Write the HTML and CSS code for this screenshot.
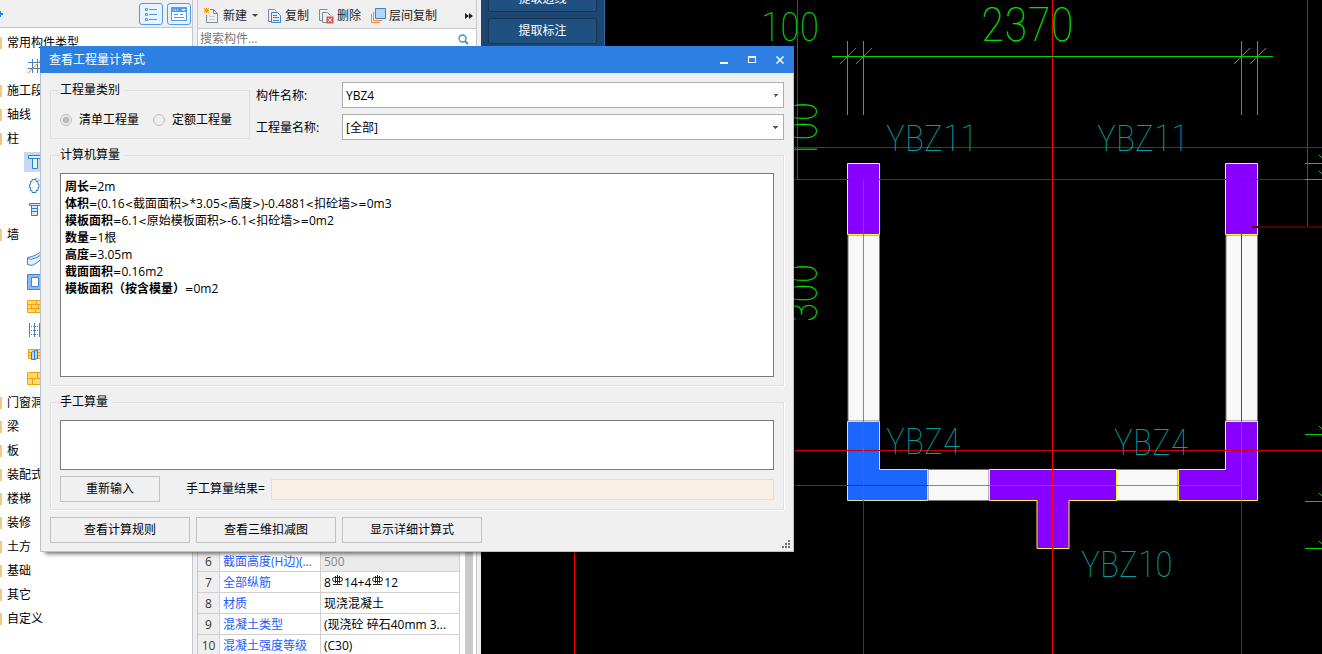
FILE: index.html
```html
<!DOCTYPE html>
<html lang="zh-CN">
<head>
<meta charset="utf-8">
<title>查看工程量计算式</title>
<link rel="stylesheet" href="styles.css">
</head>
<body>
<div class="app">
  <aside class="nav">
    <header class="nav-head">
      <svg class="plus" width="4" height="24" viewBox="0 0 4 24"><path d="M0 12h3M0 9v6" stroke="#2f80d8" stroke-width="2"/></svg>
      <button class="view-btn" aria-label="列表"><svg width="14" height="14" viewBox="0 0 14 14" fill="none" stroke="#4d9bea"><path d="M1.5 1.5h2v2h-2zM1.5 6.500h2v2h-2zM1.500 11.500h2v2h-2zM5 2.500h8M5 7.500h8M5 12.500h8"/></svg></button>
      <button class="view-btn" aria-label="卡片"><svg width="16" height="14" viewBox="0 0 16 14"><path d="M.5.5h15v13H.5z" fill="#fff" stroke="#4d9bea"/><path d="M1 1h14v4H1z" fill="#4d9bea"/><path d="M2 3h1M4 3h1M6 3h1M11 2.500h3l-1.500 1.500z" stroke="#fff"/><path d="M3 7.500h4M3 10.500h10M9 7.500h3" stroke="#4d9bea"/></svg></button>
    </header>
    <ul class="tree">
      <li class="folder">常用构件类型</li>
      <li class="leaf"><svg viewBox="0 0 16 16"><path d="M5.500 1v14M10.500 1v14M1 4.500h15M1 10.500h15" stroke="#3d86d6" fill="none"/><path d="M1 15L14 2" stroke="#f08a30"/></svg></li>
      <li class="folder">施工段</li>
      <li class="folder">轴线</li>
      <li class="folder">柱</li>
      <li class="leaf selected"><svg viewBox="0 0 16 16" fill="#e6f1ff" stroke="#2f7fd0"><path d="M1.500 1.500h14v3h-14zM5.500 4.500h5v10h-5z"/></svg></li>
      <li class="leaf"><svg viewBox="0 0 16 16" fill="#fff" stroke="#2f7fd0"><path d="M5 1.500h4v2h2v3h1v3h-1v3h-2v2H5v-2H3.500v-3h-1v-3h1v-3H5z"/><path d="M8 .5h3v2h2" stroke="#9bc5f0"/></svg></li>
      <li class="leaf"><svg viewBox="0 0 16 16" fill="#d9e9fa" stroke="#2f7fd0"><path d="M2.500 1.500h12v2h-12zM4.500 3.500h6v10h-6zM5 6.500h5M5 9.500h5"/></svg></li>
      <li class="folder">墙</li>
      <li class="leaf"><svg viewBox="0 0 16 16" fill="#e3eef9" stroke="#3d86d6"><path d="M.5 7.500Q10 6 15 .5v8Q9 14 5 15.500l-4.500-1z"/><path d="M.5 7.500l3 2Q11 8 15 4" fill="none"/></svg></li>
      <li class="leaf"><svg viewBox="0 0 16 16" fill="#8dbaf0" stroke="#3d86d6"><path d="M.5.5h15v15H.5z"/><path d="M4.500 3.500h7v9h-7z" fill="#fff"/></svg></li>
      <li class="leaf"><svg viewBox="0 0 16 16" fill="#ffd978" stroke="#f5a300"><path d="M.5 2.500h15v12H.5zM.5 6.500h15M.5 10.500h15M9.500 2v4M4.500 6v4M11.500 6v4M8.500 10v4"/></svg></li>
      <li class="leaf"><svg viewBox="0 0 16 16" stroke="#3d86d6" fill="none"><path d="M2.500 1v14M7.500 1v14M12.500 1v14"/><path d="M2 4.500h14M2 8.500h14M2 12.500h14" stroke-dasharray="1 1"/></svg></li>
      <li class="leaf"><svg viewBox="0 0 16 16" fill="#ffd978" stroke="#f5a300"><path d="M1.500 3.500h14v9h-14zM1 6.500h14M1 9.500h14"/><path d="M4.500 6.500l3-2h3v8l-3 1h-3z" fill="#b9d7fa" stroke="#2f7fd0"/><path d="M7.500 5v9" stroke="#2f7fd0"/></svg></li>
      <li class="leaf"><svg viewBox="0 0 16 16" fill="#ffd978" stroke="#f5a300"><path d="M.5 2.500h15v12H.5zM.5 8.500h15M10.500 2v6M5.500 8v6"/></svg></li>
      <li class="folder">门窗洞</li>
      <li class="folder">梁</li>
      <li class="folder">板</li>
      <li class="folder">装配式</li>
      <li class="folder">楼梯</li>
      <li class="folder">装修</li>
      <li class="folder">土方</li>
      <li class="folder">基础</li>
      <li class="folder">其它</li>
      <li class="folder">自定义</li>
    </ul>
  </aside>

  <section class="parts">
    <div class="toolbar">
      <button class="tool"><svg width="16" height="16" viewBox="0 0 16 16" fill="none"><path d="M2.500 7v7.500h11v-9l-4-4H6M9.500 1.500v4h4" stroke="#7c8c9c"/><path d="M5 8.500h6M5 11.500h6" stroke="#c8cdd4"/><path d="M0 0l5 5M5 0L0 5M2.500 0v5M0 2.500h5" stroke="#f39a1c"/></svg>新建<i class="caret"></i></button>
      <button class="tool"><svg width="14" height="16" viewBox="0 0 14 16" fill="none" stroke="#3a7fd0"><path d="M3.500 13.500h-3V1.500h6l2 2" stroke="#7c8c9c"/><path d="M3.500 4.500h6l3 3v7h-9zM5 7.500h4M5 9.500h6M5 12.500h6"/></svg>复制</button>
      <button class="tool"><svg width="15" height="16" viewBox="0 0 15 16" fill="none"><path d="M3.500 12.500h-3V1.500h8M8 14.500H3.500v-10h5l3 3" stroke="#7c8c9c"/><path d="M7.500 8.500h7v7h-7z" fill="#d9534f"/><path d="M9 10l4 4M13 10l-4 4" stroke="#fff"/></svg>删除</button>
      <button class="tool"><svg width="15" height="16" viewBox="0 0 15 16" fill="none"><path d="M.5 6v8.500H9M2.500 4v8.500H11" stroke="#f08a30"/><path d="M4.500.5h10v10h-10z" fill="#b4d5ff" stroke="#3a7fd0"/></svg>层间复制</button>
      <button class="tool more" aria-label="更多"><svg width="8" height="6" viewBox="0 0 8 6"><path d="M0 0l4 3-4 3zM4 0l4 3-4 3z" fill="#222"/></svg></button>
    </div>
    <div class="search">
      <input type="text" placeholder="搜索构件..." aria-label="搜索构件">
      <svg width="11" height="11" viewBox="0 0 11 11" fill="none" stroke="#3192c8"><circle cx="4.500" cy="4.500" r="3.500" stroke-width="1.300"/><path d="M7 7l3 3" stroke-width="2"/></svg>
    </div>
    <div class="props">
      <table>
        <tr><th>6</th><td class="key">截面高度(H边)(...</td><td class="muted">500</td></tr>
        <tr><th>7</th><td class="key">全部纵筋</td><td>8<svg class="rebar" viewBox="0 0 11 12"><path d="M5.500 0v10M2.500 2.500h6a2 2 0 0 1 0 4h-6a2 2 0 0 1 0-4zM3.500 1v7M7.500 1v7M1 9.500h9"/></svg>14+4<svg class="rebar" viewBox="0 0 11 12"><path d="M5.500 0v10M2.500 2.500h6a2 2 0 0 1 0 4h-6a2 2 0 0 1 0-4zM3.500 1v7M7.500 1v7M1 9.500h9"/></svg>12</td></tr>
        <tr><th>8</th><td class="key">材质</td><td>现浇混凝土</td></tr>
        <tr><th>9</th><td class="key">混凝土类型</td><td>(现浇砼 碎石40mm 3...</td></tr>
        <tr><th>10</th><td class="key">混凝土强度等级</td><td>(C30)</td></tr>
      </table>
      <div class="scroll"></div>
    </div>
  </section>

  <main class="canvas">
    <svg class="drawing" width="100%" height="100%">
      <g transform="translate(-481 0)">
        <g class="wall">
          <path d="M848 235h31.500v186H848zM1226 235h31.500v186H1226zM928 469.500h61v31h-61zM1116 469.500h62v31h-62z"/>
        </g>
        <g class="column">
          <path d="M847.500 163.500h32v71h-32zM1225.500 163.500h32v71h-32z"/>
          <path d="M989.500 469.500h127v31h-47.500v48h-32v-48H989.500z"/>
          <path d="M1225.500 421.500h32v79h-79v-31h47z"/>
          <path class="picked" d="M847.500 421.500h32v48h48v31h-80z"/>
        </g>
        <g class="axis">
          <path d="M1052.500 0v654M797.500 0v179M1307.500 0v227M574.500 500v154M1241.500 179v242"/>
          <path class="dim" d="M794 147.500h528M794 179.500h513M794 450.500h528M794 485.500h134M863.500 501v153M1241.500 501v153"/>
          <path class="soft" d="M863.500 179v322M928 485.500h313M1241.500 421v80"/>
          <path class="faint" d="M1252 227h70"/>
        </g>
        <g class="dimension">
          <path d="M832 56.500h441M847.500 41v74M863.500 41v74M1241.500 41v74M1257.500 41v74M840 64l16-16M856 64l16-16M1234 64l16-16M1250 64l16-16"/>
          <path d="M1305 163.500h17M1305 179.500h17M1305 434.500h17M1305 501.500h17M1305 548.500h17M1319 155l4 4M1319 171l4 4M1319 426l4 4M1319 493l4 4M1319 541l4 4"/>
        </g>
        <g class="dim-text">
          <text x="761" y="41">100</text>
          <text x="981" y="41" class="wide">2370</text>
          <text transform="translate(817 160) rotate(-90)">100</text>
          <text transform="translate(817 322) rotate(-90)">300</text>
        </g>
        <g class="label">
          <text x="886" y="151">YBZ11</text>
          <text x="1097" y="151">YBZ11</text>
          <text x="886" y="454">YBZ4</text>
          <text x="1114" y="455">YBZ4</text>
          <text x="1081" y="577">YBZ10</text>
        </g>
      </g>
    </svg>
    <div class="cad-tools">
      <button>提取边线</button>
      <button>提取标注</button>
    </div>
  </main>
</div>

<div class="dialog" role="dialog" aria-labelledby="dialog-title">
  <header class="titlebar">
    <h1 id="dialog-title">查看工程量计算式</h1>
    <button aria-label="最小化"><svg width="8" height="8" viewBox="0 0 8 8"><path d="M0 6h8v2H0z" fill="#fff"/></svg></button>
    <button aria-label="最大化"><svg width="8" height="8" viewBox="0 0 8 8"><path d="M0 0h8v7H0zM1 2v4h6V2z" fill="#fff" fill-rule="evenodd"/></svg></button>
    <button aria-label="关闭"><svg width="8" height="8" viewBox="0 0 8 8"><path d="M.5.5l7 7M7.500.5l-7 7" stroke="#fff" stroke-width="1.500"/></svg></button>
  </header>
  <div class="dialog-body">
    <div class="filters">
      <fieldset class="kind">
        <legend>工程量类别</legend>
        <label><input type="radio" name="kind" checked disabled>清单工程量</label>
        <label><input type="radio" name="kind" disabled>定额工程量</label>
      </fieldset>
      <div class="fields">
        <label for="part">构件名称:</label>
        <select id="part"><option>YBZ4</option></select>
        <label for="quantity">工程量名称:</label>
        <select id="quantity"><option>[全部]</option></select>
      </div>
    </div>
    <fieldset class="computed">
      <legend>计算机算量</legend>
      <div class="result-text">
        <p><b>周长</b><i>=</i>2m</p>
        <p><b>体积</b><i>=</i>(0.16<i>&lt;</i>截面面积<i>&gt;</i>*3.05<i>&lt;</i>高度<i>&gt;</i>)-0.4881<i>&lt;</i>扣砼墙<i>&gt;=</i>0m3</p>
        <p><b>模板面积</b><i>=</i>6.1<i>&lt;</i>原始模板面积<i>&gt;</i>-6.1<i>&lt;</i>扣砼墙<i>&gt;=</i>0m2</p>
        <p><b>数量</b><i>=</i>1根</p>
        <p><b>高度</b><i>=</i>3.05m</p>
        <p><b>截面面积</b><i>=</i>0.16m2</p>
        <p><b>模板面积（按含模量）</b><i>=</i>0m2</p>
      </div>
    </fieldset>
    <fieldset class="manual">
      <legend>手工算量</legend>
      <textarea aria-label="手工算量"></textarea>
      <div class="manual-row">
        <button class="btn">重新输入</button>
        <label for="manual-result">手工算量结果=</label>
        <input id="manual-result" type="text" readonly>
      </div>
    </fieldset>
    <div class="actions">
      <button class="btn">查看计算规则</button>
      <button class="btn">查看三维扣减图</button>
      <button class="btn">显示详细计算式</button>
    </div>
  </div>
  <svg class="grip" width="8" height="8" viewBox="0 0 8 8"><path d="M6 0h2v2H6zM3 3h2v2H3zM6 3h2v2H6zM0 6h2v2H0zM3 6h2v2H3zM6 6h2v2H6z" fill="#6d7580"/></svg>
</div>
</body>
</html>
```
FILE: styles.css
```css
* { box-sizing: border-box; }
body {
  margin: 0;
  overflow: hidden;
  background: #f0f0f0;
  color: #000;
}
body, button, input, select, textarea {
  font: 12px/16px "Open Sans", "Noto Sans CJK SC", sans-serif;
}
button { padding: 0; color: inherit; }
svg { display: block; flex: none; }

.app { display: flex; height: 100vh; overflow: hidden; }

/* component type tree */
.nav { flex: none; width: 193px; background: #fff; border-right: 1px solid #c4c6cc; }
.nav-head {
  display: flex;
  align-items: center;
  gap: 4px;
  height: 28px;
  background: #efefef;
  border-bottom: 1px solid #c4c6cc;
}
.plus { margin-right: auto; }
.view-btn {
  display: grid;
  place-items: center;
  width: 24px;
  height: 22px;
  background: #e8f3ff;
  border: 1px solid #4d9bea;
  border-radius: 3px;
}
.view-btn:last-child { margin-right: 1px; }
.tree { margin: 0; padding: 2px 0 0; list-style: none; }
.tree li { display: flex; align-items: center; height: 24px; }
.tree .folder { padding: 2px 0 0 7px; }
.folder::before {
  content: "";
  width: 2px;
  height: 12px;
  margin: 0 5px 0 -7px;
  background: #f0c987;
}
.tree .leaf { padding-left: 27px; }
.leaf svg { width: 16px; height: 16px; }
.leaf.selected {
  background: linear-gradient(#c7d9f1, #c7d9f1) 24px 2px / 100% 20px no-repeat;
}

/* component list */
.parts {
  flex: none;
  display: flex;
  flex-direction: column;
  width: 280px;
  margin: 0 4px;
  background: #fff;
  border: solid #c4c6cc;
  border-width: 0 1px;
}
.toolbar {
  display: flex;
  align-items: center;
  gap: 10px;
  height: 29px;
  padding: 3px 3px 0 6px;
  background: #efefef;
  border-bottom: 1px solid #c4c6cc;
}
.tool {
  display: flex;
  align-items: center;
  gap: 3px;
  color: #222;
  background: none;
  border: 0;
}
.more { margin-left: auto; }
.caret {
  margin-left: 2px;
  border: solid transparent;
  border-width: 3px 3px 0;
  border-top-color: #444;
}
.search { display: flex; align-items: center; padding: 2px 7px 0 2px; }
.search input { flex: 1; min-width: 0; padding: 0; border: 0; outline: 0; }
.search input::placeholder { color: #777; }
.props { display: flex; margin: auto 3px -2px 0; }
table { flex: 1; border-spacing: 0; table-layout: fixed; }
tr { height: 21px; }
th, td {
  padding: 2px 2px 0 3px;
  font-weight: 400;
  text-align: left;
  line-height: 16px;
  white-space: nowrap;
  overflow: hidden;
  border: solid #d0d0d0;
  border-width: 0 1px 1px 0;
}
th { width: 22px; padding: 2px 0 0; text-align: center; color: #333; background: #efefef; }
.key { width: 101px; color: #1a5cff; }
.muted { color: #888; background: #ebebeb; }
.rebar {
  display: inline-block;
  width: 11px;
  height: 12px;
  margin: 0 1px;
  vertical-align: baseline;
  fill: none;
  stroke: #222;
}
.scroll { width: 8px; margin-left: 5px; background: #c9c9c9; }

/* drawing canvas */
.canvas { position: relative; flex: 1; min-width: 0; background: #000; overflow: hidden; }
.drawing { position: absolute; inset: 0; fill: none; }
.wall path { fill: #f8f8f8; stroke: #777; }
.column path { fill: #80f; stroke: #ffff20; }
.column .picked { fill: #1a66ff; stroke: #dce690; }
.axis { stroke: #f00; }
.axis .dim { stroke: #c80000; }
.axis .soft { stroke: #f03048; stroke-opacity: .8; }
.axis .faint { stroke: #500000; stroke-width: 2px; }
.dimension { stroke: #00d000; }
.dim-text, .label {
  font-family: "Roboto Condensed", Roboto, sans-serif;
  font-weight: 100;
  font-size: 36px;
}
.dim-text { fill: #00e000; font-size: 40px; }
.dim-text .wide { font-size: 48px; }
.label { fill: #00a0a0; }
.cad-tools {
  position: absolute;
  top: -14px;
  left: 0;
  display: flex;
  flex-direction: column;
  gap: 6px;
  width: 124px;
  height: 400px;
  padding: 0 7px;
  background: #1d4672;
  border-right: 1px solid #2b659c;
}
.cad-tools button {
  height: 26px;
  color: #fff;
  background: #205080;
  border: 1px solid #173656;
  border-radius: 2px;
}

/* quantity dialog */
.dialog {
  position: absolute;
  top: 46px;
  left: 40px;
  width: 754px;
  background: #f0f0f0;
  border: 1px solid #b8c2d0;
  border-top: 0;
  box-shadow: 3px 4px 4px -2px #0008;
}
.titlebar {
  display: flex;
  align-items: center;
  gap: 20px;
  height: 27px;
  margin: 0 -1px;
  padding: 0 10px 0 9px;
  color: #fff;
  background: #2d7fe2;
}
.titlebar h1 { margin: 0 auto 0 0; font: inherit; }
.titlebar button { background: none; border: 0; }
.dialog-body {
  display: flex;
  flex-direction: column;
  gap: 7px;
  padding: 9px 9px 8px;
}
.filters { display: flex; gap: 6px; }
fieldset {
  min-width: 0;
  margin: 0;
  padding: 0 9px;
  border: 1px solid #e0e0e0;
  box-shadow: inset 1px 0 #fff, 0 1px #fff, 1px 0 #fff;
}
legend { padding: 0 4px 0 0; }
.kind { display: flex; gap: 14px; width: 200px; height: 57px; box-shadow: none; }
.kind label { display: flex; align-items: center; gap: 7px; padding-top: 3px; }
input[type="radio"] {
  appearance: none;
  width: 12px;
  height: 12px;
  margin: 0;
  border: 1px solid #bcbcbc;
  border-radius: 50%;
}
input[type="radio"]:checked { background: radial-gradient(circle, #bcbcbc 3px, transparent 4px); }
.fields {
  flex: 1;
  display: grid;
  grid-template-columns: 80px 1fr;
  grid-auto-rows: 26px;
  gap: 6px;
  align-items: center;
}
.fields label { padding-top: 2px; }
select {
  appearance: none;
  height: 26px;
  padding: 1px 3px 0;
  color: #000;
  background-color: #fff;
  background-image:
    linear-gradient(to bottom right, #555 50%, transparent 50%),
    linear-gradient(to bottom left, #555 50%, transparent 50%);
  background-size: 3px 3px;
  background-position: right 4px center, right 7px center;
  background-repeat: no-repeat;
  border: 1px solid #adadad;
  border-radius: 0;
}
.computed { padding-bottom: 8px; }
.result-text {
  height: 204px;
  margin-top: 10px;
  padding: 4px;
  line-height: 17px;
  background: #fff;
  border: 1px solid #7a7a7a;
}
.result-text p { margin: 0; height: 17px; }
.result-text i { font: 10px "DejaVu Sans", sans-serif; }
.manual { margin-top: 1px; padding-bottom: 7px; }
textarea {
  display: block;
  width: 100%;
  height: 50px;
  margin-top: 10px;
  resize: none;
  background: #fff;
  border: 1px solid #7a7a7a;
}
.manual-row { display: flex; align-items: center; padding-top: 6px; }
.manual-row label { margin: 0 6px 0 26px; }
.manual-row input {
  flex: 1;
  min-width: 0;
  height: 21px;
  background: #faefe5;
  border: 1px solid #dedede;
}
.btn { height: 26px; background: #f0f0f0; border: 1px solid #c2c2c2; }
.manual-row .btn { width: 100px; }
.actions { display: flex; gap: 6px; }
.actions .btn { width: 140px; }
.grip { position: absolute; right: 3px; bottom: 3px; }
```
